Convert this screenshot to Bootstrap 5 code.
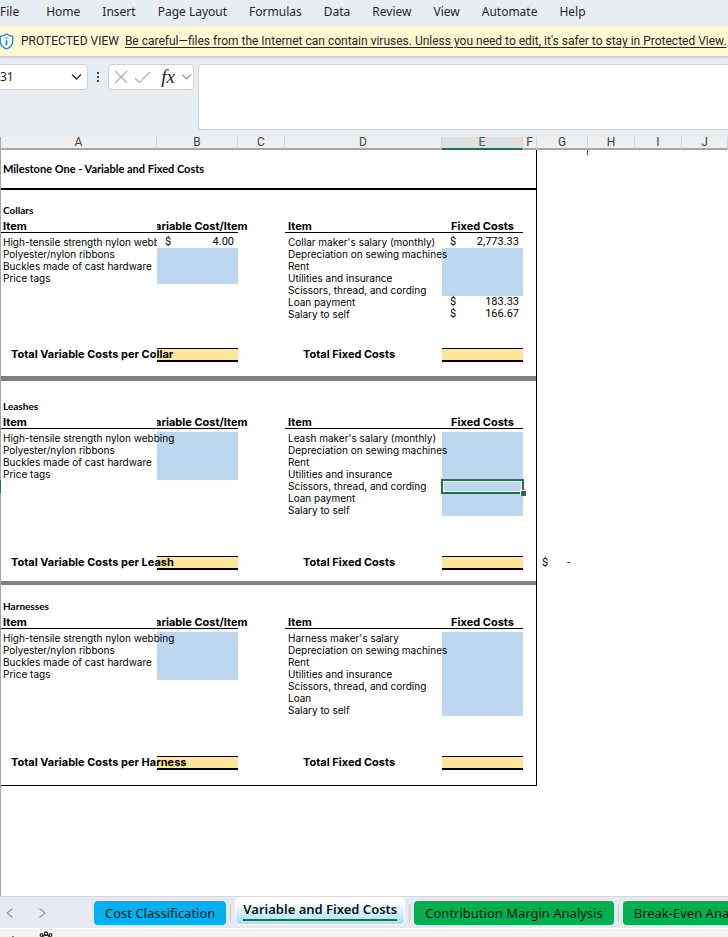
<!DOCTYPE html>
<html lang="en">
<head>
<meta charset="utf-8">
<meta name="viewport" content="width=device-width, initial-scale=1">
<title>Variable and Fixed Costs</title>
<link rel="stylesheet" href="https://cdn.jsdelivr.net/npm/bootstrap@5.3.0/dist/css/bootstrap.min.css">
<style>
  body { background: #e8edf1; font-family: "Noto Sans", "Open Sans", sans-serif; font-size: 12px; line-height: 16px; color: #262626; overflow: hidden; }
  .ribbon { height: 26px; gap: 22px; padding-bottom: 2px; }
  .ribbon a { color: #262626; text-decoration: none; white-space: nowrap; }
  .ribbon a:first-child { margin-right: 5px; }
  .notice { height: 31px; background: #fef8d3; border-bottom: 1px solid #c8cbd2; box-shadow: 0 1px 2px #c9ced6; white-space: nowrap; font-family: Roboto, sans-serif; overflow: hidden; }
  .notice a { color: #262626; text-decoration: underline; text-underline-offset: 2px; }
  .notice svg { margin-left: -1px; margin-right: 7px; }
  .notice span { margin-right: 6px; }
  .formula-area { padding-top: 7px; padding-bottom: 7px; gap: 4px; }
  .bar-box { height: 26px; background: #fff; border: 1px solid #cfd1d4; border-radius: 4px; }
  .name-box { width: 88px; border-left: 0; border-radius: 0 4px 4px 0; }
  .name-box input { width: 60px; border: 0; outline: 0; background: transparent; padding: 0; font-size: 12px; color: #262626; }
  .bar-box button, .sheet-tabs button { border: 0; background: transparent; padding: 0; display: flex; align-items: center; }
  .fx-box { width: 86px; padding-left: 5px; padding-right: 1px; }
  .bar-box .fx-label { font: italic 19px/20px "Liberation Serif", serif; color: #222; padding-left: 4px; }
  .formula-input { height: 66px; border: 1px solid #cfd1d4; border-right: 0; border-radius: 4px 0 0 4px; resize: none; outline: 0; background: #fff; }
  .sheet { background: #fff; border-left: 1px solid #a6a6a6; min-height: 0; }
  .grid { width: 100%; table-layout: fixed; border-collapse: separate; border-spacing: 0; font: 10px/12px Inter, sans-serif; color: #000; white-space: nowrap; }
  .grid td, .grid th { padding: 0; }
  .grid thead th { height: 13px; background: #efefef; border-right: 1px solid #d2d2d2; border-bottom: 2px solid #a6a6a6; font-weight: 400; text-align: center; color: #444; font-family: Roboto, sans-serif; font-size: 12px; line-height: 11px; }
  .grid thead .picked { background: #e0e0e0; border-bottom-color: #217346; color: #217346; }
  .grid .edge { border-right: 1px solid #000; }
  .grid tbody tr { height: 12px; }
  .grid tbody td:first-child, .grid tbody th:first-child { padding-left: 2px; text-align: left; }
  .grid td:nth-child(4), .grid th:nth-child(4) { padding-left: 3px; text-align: left; }
  .grid thead th:nth-child(4) { padding-left: 0; text-align: center; }
  .grid tbody .title-row { height: 40px; }
  .grid .title-row > * { border-bottom: 2px solid #000; }
  .grid .title-row > :last-child { border-bottom: 0; position: relative; }
  .grid .title-row th, .grid .name-row th { font-family: Lato, sans-serif; font-size: 10px; font-weight: 700; }
  .grid .title-row th { font-size: 11px; }
  .grid tbody .head-row { height: 16px; }
  .grid .head-row th { font-size: 11px; font-weight: 700; border-bottom: 1px solid #000; vertical-align: bottom; }
  .grid .head-row .fixed-head { text-align: center; }
  .grid tbody .name-row { height: 14px; }
  .grid tbody .total-row { height: 14px; }
  .grid tbody .total-row th { font-size: 11px; font-weight: 700; padding-left: 10px; vertical-align: top; }
  .grid tbody .total-row th:nth-child(4) { padding-left: 18px; }
  .grid .sum { background: #ffe699; border-top: 1px solid #000; border-bottom: 2px solid #000; }
  .grid .fill { background: #bdd7ee; }
  .grid .clip { overflow: hidden; }
  .grid .divider td { background: #808080; }
  .grid .divider td:last-child { background: transparent; }
  .grid .last > td { border-bottom: 1px solid #000; }
  .grid .last > td:last-child { border-bottom: 0; }
  .grid tbody .h3x { height: 3px; } .grid tbody .h4x { height: 4px; } .grid tbody .h5x { height: 5px; }
  .grid tbody .h11x { height: 11px; } .grid tbody .h13x { height: 13px; } .grid tbody .h14x { height: 14px; }
  .grid tbody .h16x { height: 16px; } .grid tbody .h18x { height: 18px; } .grid tbody .h28x { height: 28px; } .grid tbody .h40x { height: 40px; }
  .spill { display: flex; justify-content: center; clip-path: inset(0 -20px 0 0); }
  .money { display: flex; justify-content: space-between; padding: 0 4px 0 8px; font-family: Roboto, sans-serif; font-size: 11px; }
  .money-short { padding: 0 18px 0 5px; }
  .active-cell { position: relative; }
  .active-cell::before { content: ""; position: absolute; inset: -1px -1px -2px -1px; border: 2px solid #217346; box-shadow: inset 0 0 0 1px #fff; }
  .active-cell::after { content: ""; position: absolute; right: -3px; bottom: -4px; width: 6px; height: 6px; background: #217346; border: 1px solid #fff; border-right: 0; border-bottom: 0; }
  .row-mark { position: relative; }
  .row-mark::before { content: ""; position: absolute; left: -1px; top: 0; width: 1px; height: 13px; background: #217346; }
  .break-mark { position: absolute; right: 0; top: 0; width: 1px; height: 5px; background: #4472c4; box-shadow: 0 1px 2px #999; }
  .sheet-tabs { height: 32px; background: #e6e9ef; border-top: 1px solid #d4d7dc; gap: 4px; white-space: nowrap; font-size: 13px; overflow: hidden; }
  .sheet-tabs .arrows { width: 90px; padding-left: 5px; gap: 22px; }
  .sheet-tabs .tab { height: 24px; border-radius: 4px; padding: 0 11px; color: #111; flex: none; }
  .sheet-tabs .blue { background: #00b0f0; }
  .sheet-tabs .green { background: #00b050; }
  .sheet-tabs .current { height: 28px; margin-bottom: 4px; padding: 0 7px; background: linear-gradient(#fff 20%, #a3e0f8); border: 1px solid #fff; border-top: 0; font-weight: 600; }
  .sheet-tabs .current span { border-bottom: 2px solid #107c41; line-height: 20px; }
  .tab-rule { width: 1px; height: 18px; background: #c6c9ce; flex: none; }
  .status { height: 9px; background: #f3f3f3; border-top: 1px solid #fff; overflow: hidden; }
</style>
<script src="https://cdn.jsdelivr.net/npm/bootstrap@5.3.0/dist/js/bootstrap.bundle.min.js"></script>
</head>
<body class="d-flex flex-column vh-100">
<nav class="ribbon d-flex align-items-center" aria-label="Ribbon">
  <a href="#">File</a><a href="#">Home</a><a href="#">Insert</a><a href="#">Page Layout</a><a href="#">Formulas</a><a href="#">Data</a><a href="#">Review</a><a href="#">View</a><a href="#">Automate</a><a href="#">Help</a>
</nav>
<div class="notice d-flex align-items-center flex-shrink-0" role="status">
  <svg class="flex-shrink-0" width="15" height="17" viewBox="0 0 15 17" fill="none" stroke="#2488cf" stroke-width="1.3"><path fill="#fff" d="M7.5 1C5.500 2.600 3.500 3.300 1.200 3.400V8c0 3.800 2.300 6.300 6.300 8 4-1.700 6.300-4.200 6.300-8V3.400C11.500 3.300 9.500 2.600 7.500 1z"/><path stroke-width="1.800" d="M7.500 7.300V12M7.500 4.400v1.700"/></svg>
  <span>PROTECTED VIEW</span>
  <a href="#">Be careful—files from the Internet can contain viruses. Unless you need to edit, it's safer to stay in Protected View.</a>
</div>
<div class="formula-area d-flex align-items-start">
  <div class="bar-box name-box d-flex align-items-center justify-content-between flex-shrink-0 pe-1">
    <input type="text" value="31" aria-label="Name box">
    <button type="button" aria-label="Open name list"><svg width="13" height="10" viewBox="0 0 13 10" fill="none" stroke="#333" stroke-width="1.400"><path d="M2 2.500l4.500 4.500L11 2.500"/></svg></button>
  </div>
  <svg class="flex-shrink-0 mx-1" width="4" height="26" viewBox="0 0 4 26" fill="#444"><path d="M1 8h2v2H1zM1 12h2v2H1zM1 16h2v2H1z"/></svg>
  <div class="bar-box fx-box d-flex align-items-center justify-content-between flex-shrink-0">
    <button type="button" aria-label="Cancel"><svg width="14" height="14" viewBox="0 0 14 14" fill="none" stroke="#b0b0b0" stroke-width="1.200"><path d="M1 1l12 12M13 1L1 13"/></svg></button>
    <button type="button" aria-label="Enter"><svg width="17" height="14" viewBox="0 0 17 14" fill="none" stroke="#b0b0b0" stroke-width="1.200"><path d="M1 8l4.500 4.500L16 2"/></svg></button>
    <button type="button" class="fx-label" aria-label="Insert function">fx</button>
    <button type="button" aria-label="Function list"><svg width="11" height="10" viewBox="0 0 11 10" fill="none" stroke="#999" stroke-width="1.200"><path d="M1 2.500L5.500 7 10 2.500"/></svg></button>
  </div>
  <textarea class="formula-input flex-grow-1" aria-label="Formula bar"></textarea>
</div>
<main class="sheet flex-grow-1">
<table class="grid">
  <colgroup><col style="width:156px"><col style="width:81px"><col style="width:47px"><col style="width:157px"><col style="width:81px"><col style="width:14px"><col style="width:51px"><col style="width:47px"><col style="width:47px"><col></colgroup>
  <thead><tr><th>A</th><th>B</th><th>C</th><th>D</th><th class="picked">E</th><th>F</th><th>G</th><th>H</th><th>I</th><th>J</th></tr></thead>
  <tbody>
  <tr class="title-row"><th>Milestone One - Variable and Fixed Costs</th><td></td><td></td><td></td><td></td><td class="edge"></td><td><span class="break-mark"></span></td></tr>
  <tr class="h13x"><td colspan="6" class="edge"></td></tr>
  <tr class="name-row"><th>Collars</th><td colspan="5" class="edge"></td></tr>
  <tr class="head-row"><th>Item</th><th><div class="spill">Variable Cost/Item</div></th><td></td><th>Item</th><th class="fixed-head">Fixed Costs</th><td class="edge"></td></tr>
  <tr class="h3x"><td colspan="6" class="edge"></td></tr>
  <tr><td class="clip">High-tensile strength nylon webbing</td><td><div class="money"><span>$</span><span>4.00</span></div></td><td></td><td>Collar maker's salary (monthly)</td><td><div class="money"><span>$</span><span>2,773.33</span></div></td><td class="edge"></td></tr>
  <tr><td>Polyester/nylon ribbons</td><td class="fill"></td><td></td><td>Depreciation on sewing machines</td><td class="fill"></td><td class="edge"></td></tr>
  <tr><td>Buckles made of cast hardware</td><td class="fill"></td><td></td><td>Rent</td><td class="fill"></td><td class="edge"></td></tr>
  <tr><td>Price tags</td><td class="fill"></td><td></td><td>Utilities and insurance</td><td class="fill"></td><td class="edge"></td></tr>
  <tr><td></td><td></td><td></td><td>Scissors, thread, and cording</td><td class="fill"></td><td class="edge"></td></tr>
  <tr><td></td><td></td><td></td><td>Loan payment</td><td><div class="money"><span>$</span><span>183.33</span></div></td><td class="edge"></td></tr>
  <tr><td></td><td></td><td></td><td>Salary to self</td><td><div class="money"><span>$</span><span>166.67</span></div></td><td class="edge"></td></tr>
  <tr class="h28x"><td colspan="6" class="edge"></td></tr>
  <tr class="total-row"><th>Total Variable Costs per Collar</th><td class="sum"></td><td></td><th>Total Fixed Costs</th><td class="sum"></td><td class="edge"></td></tr>
  <tr class="h14x"><td colspan="6" class="edge"></td></tr>
  <tr class="divider h5x"><td colspan="6" class="edge"></td><td></td></tr>
  <tr class="h18x"><td colspan="6" class="edge"></td></tr>
  <tr class="name-row"><th>Leashes</th><td colspan="5" class="edge"></td></tr>
  <tr class="head-row"><th>Item</th><th><div class="spill">Variable Cost/Item</div></th><td></td><th>Item</th><th class="fixed-head">Fixed Costs</th><td class="edge"></td></tr>
  <tr class="h3x"><td colspan="6" class="edge"></td></tr>
  <tr><td>High-tensile strength nylon webbing</td><td class="fill"></td><td></td><td>Leash maker's salary (monthly)</td><td class="fill"></td><td class="edge"></td></tr>
  <tr><td>Polyester/nylon ribbons</td><td class="fill"></td><td></td><td>Depreciation on sewing machines</td><td class="fill"></td><td class="edge"></td></tr>
  <tr><td>Buckles made of cast hardware</td><td class="fill"></td><td></td><td>Rent</td><td class="fill"></td><td class="edge"></td></tr>
  <tr><td>Price tags</td><td class="fill"></td><td></td><td>Utilities and insurance</td><td class="fill"></td><td class="edge"></td></tr>
  <tr><td class="row-mark"></td><td></td><td></td><td>Scissors, thread, and cording</td><td class="fill active-cell"></td><td class="edge"></td></tr>
  <tr><td></td><td></td><td></td><td>Loan payment</td><td class="fill"></td><td class="edge"></td></tr>
  <tr><td></td><td></td><td></td><td>Salary to self</td><td class="fill"></td><td class="edge"></td></tr>
  <tr class="h40x"><td colspan="6" class="edge"></td></tr>
  <tr class="total-row"><th>Total Variable Costs per Leash</th><td class="sum"></td><td></td><th>Total Fixed Costs</th><td class="sum"></td><td class="edge"></td><td><div class="money money-short"><span>$</span><span>-</span></div></td></tr>
  <tr class="h11x"><td colspan="6" class="edge"></td></tr>
  <tr class="divider h4x"><td colspan="6" class="edge"></td><td></td></tr>
  <tr class="h14x"><td colspan="6" class="edge"></td></tr>
  <tr class="name-row"><th>Harnesses</th><td colspan="5" class="edge"></td></tr>
  <tr class="head-row"><th>Item</th><th><div class="spill">Variable Cost/Item</div></th><td></td><th>Item</th><th class="fixed-head">Fixed Costs</th><td class="edge"></td></tr>
  <tr class="h3x"><td colspan="6" class="edge"></td></tr>
  <tr><td>High-tensile strength nylon webbing</td><td class="fill"></td><td></td><td>Harness maker's salary</td><td class="fill"></td><td class="edge"></td></tr>
  <tr><td>Polyester/nylon ribbons</td><td class="fill"></td><td></td><td>Depreciation on sewing machines</td><td class="fill"></td><td class="edge"></td></tr>
  <tr><td>Buckles made of cast hardware</td><td class="fill"></td><td></td><td>Rent</td><td class="fill"></td><td class="edge"></td></tr>
  <tr><td>Price tags</td><td class="fill"></td><td></td><td>Utilities and insurance</td><td class="fill"></td><td class="edge"></td></tr>
  <tr><td></td><td></td><td></td><td>Scissors, thread, and cording</td><td class="fill"></td><td class="edge"></td></tr>
  <tr><td></td><td></td><td></td><td>Loan</td><td class="fill"></td><td class="edge"></td></tr>
  <tr><td></td><td></td><td></td><td>Salary to self</td><td class="fill"></td><td class="edge"></td></tr>
  <tr class="h40x"><td colspan="6" class="edge"></td></tr>
  <tr class="total-row"><th>Total Variable Costs per Harness</th><td class="sum"></td><td></td><th>Total Fixed Costs</th><td class="sum"></td><td class="edge"></td></tr>
  <tr class="last h16x"><td colspan="6" class="edge"></td><td></td></tr>
  </tbody>
</table>
</main>
<nav class="sheet-tabs d-flex align-items-center flex-shrink-0" aria-label="Sheets">
  <div class="arrows d-flex align-items-center flex-shrink-0">
    <button type="button" aria-label="Previous sheet"><svg width="10" height="12" viewBox="0 0 10 12" fill="none" stroke="#999" stroke-width="1.200"><path d="M7.500 1.500L2 6l5.500 4.500"/></svg></button>
    <button type="button" aria-label="Next sheet"><svg width="10" height="12" viewBox="0 0 10 12" fill="none" stroke="#999" stroke-width="1.200"><path d="M2.500 1.500L8 6l-5.500 4.500"/></svg></button>
  </div>
  <button type="button" class="tab blue">Cost Classification</button>
  <span class="tab-rule"></span>
  <button type="button" class="tab current" aria-current="page"><span>Variable and Fixed Costs</span></button>
  <span class="tab-rule"></span>
  <button type="button" class="tab green">Contribution Margin Analysis</button>
  <span class="tab-rule"></span>
  <button type="button" class="tab green">Break-Even Analysis</button>
</nav>
<footer class="status d-flex flex-shrink-0">
  <svg width="60" height="8" viewBox="0 0 60 8" fill="none" stroke="#333" stroke-width="1.300"><path d="M13 7v1.500M43 8c0-1.500 1-2 3-2s3 .5 3 2"/><circle cx="46" cy="4.700" r="1.700"/><circle cx="41.500" cy="6" r="1.300"/><circle cx="50.500" cy="6" r="1.300"/></svg>
</footer>
</body>
</html>
